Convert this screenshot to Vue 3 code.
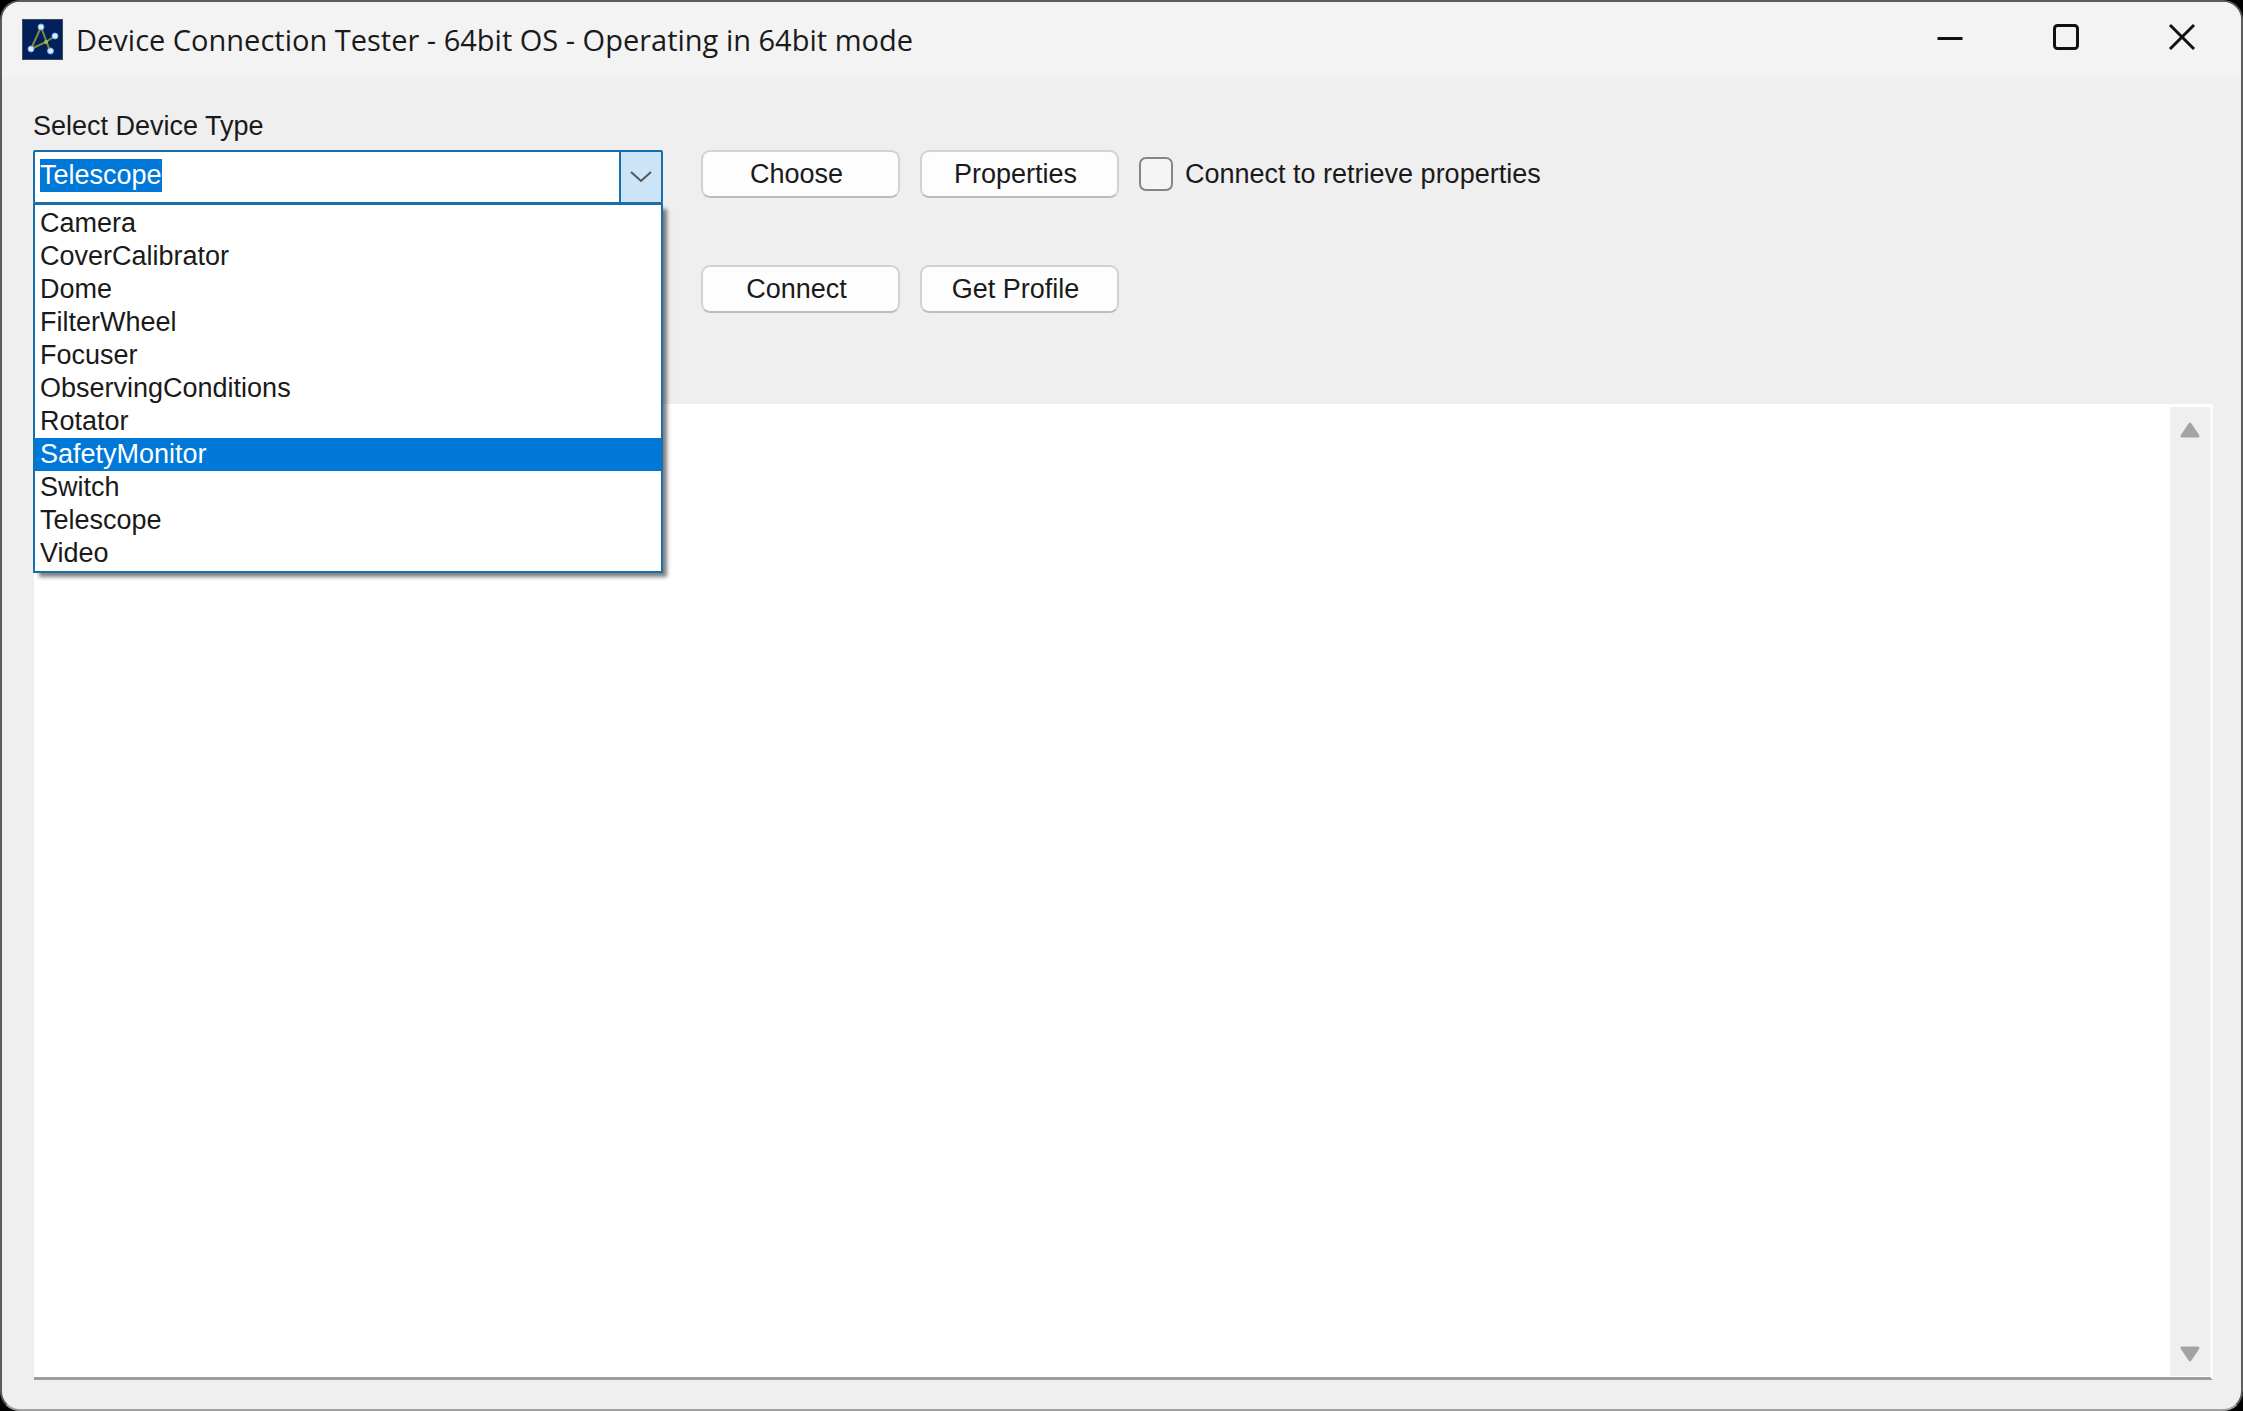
<script setup>
import { ref, onMounted } from 'vue'

const device_types = [
    'Camera',
    'CoverCalibrator',
    'Dome',
    'FilterWheel',
    'Focuser',
    'ObservingConditions',
    'Rotator',
    'SafetyMonitor',
    'Switch',
    'Telescope',
    'Video',
]

const selected = ref('Telescope')
const hovered = ref('SafetyMonitor')
const list_open = ref(true)
const connect_first = ref(false)
const log = ref('')
const device_input = ref(null)

function toggle_list()
{
    list_open.value = !list_open.value
}

function choose_type(type)
{
    selected.value = type
    list_open.value = false
}

onMounted(() => {
    device_input.value.focus()
    device_input.value.select()
})
</script>

<template>
    <div class="window">
        <header class="titlebar">
            <svg class="app_icon" viewBox="0 0 41 41">
                <rect x="0.5" y="0.5" width="40" height="40" fill="#02205a" stroke="#3c4a5c" />
                <path d="M9 30 L19 8 L28 32 M9 30 L24 23 L33 17" fill="none" stroke="#7f8c3a" stroke-width="2" />
                <g fill="#dcecff" stroke="#7fa4dc">
                    <circle cx="19" cy="8" r="3" />
                    <circle cx="33" cy="17" r="3" />
                    <circle cx="9" cy="30" r="3" />
                    <circle cx="28.500" cy="32" r="3" />
                </g>
                <circle cx="24" cy="23" r="2" fill="#a9b86a" />
            </svg>
            <h1 class="title">Device Connection Tester - 64bit OS - Operating in 64bit mode</h1>
            <button class="win_btn" aria-label="Minimize">
                <svg viewBox="0 0 28 28"><path d="M1.500 15.500 H26.500" /></svg>
            </button>
            <button class="win_btn" aria-label="Maximize">
                <svg viewBox="0 0 28 28"><rect x="2.500" y="2.500" width="23" height="23" rx="3" /></svg>
            </button>
            <button class="win_btn" aria-label="Close">
                <svg viewBox="0 0 28 28"><path d="M2 2 L26 26 M26 2 L2 26" /></svg>
            </button>
        </header>

        <main class="form">
            <div class="controls">
                <div class="device">
                    <label for="device-type">Select Device Type</label>
                    <div class="combo">
                        <input id="device-type" ref="device_input" v-model="selected" type="text" role="combobox"
                            aria-controls="device-list" :aria-expanded="list_open" autocomplete="off" spellcheck="false" />
                        <button class="combo_btn" aria-label="Show device types" @click="toggle_list">
                            <svg viewBox="0 0 22 12"><path d="M1 1 L11 10 L21 1" /></svg>
                        </button>
                        <ul v-if="list_open" id="device-list" class="combo_list" role="listbox">
                            <li v-for="type in device_types" :key="type" role="option" :aria-selected="type === hovered"
                                :class="{ active: type === hovered }" @mouseenter="hovered = type" @click="choose_type(type)">
                                {{ type }}
                            </li>
                        </ul>
                    </div>
                </div>

                <div class="actions">
                    <button class="btn">Choose</button>
                    <button class="btn">Properties</button>
                    <label class="check">
                        <input v-model="connect_first" type="checkbox" />
                        <span>Connect to retrieve properties</span>
                    </label>
                    <button class="btn">Connect</button>
                    <button class="btn">Get Profile</button>
                </div>
            </div>

            <div class="output">
                <textarea v-model="log" aria-label="Output" readonly></textarea>
                <div class="scrollbar">
                    <button aria-label="Scroll up">
                        <svg viewBox="0 0 22 18"><path d="M11 3 L19 15 H3 Z" /></svg>
                    </button>
                    <button aria-label="Scroll down">
                        <svg viewBox="0 0 22 18"><path d="M3 4 H19 L11 16 Z" /></svg>
                    </button>
                </div>
            </div>
        </main>
    </div>
</template>

<style>
html {
    background: #000;
}
</style>

<style scoped>
.window {
    box-sizing: border-box;
    display: flex;
    flex-direction: column;
    height: 100vh;
    border: 2px solid #5c5c5c;
    border-bottom-color: #a0a0a0;
    border-radius: 20px;
    overflow: hidden;
    background: #efefef;
    color: #1a1a1a;
    font-family: "Liberation Sans", Arial, sans-serif;
    font-size: 27px;
    line-height: 33px;
}

button,
input,
textarea {
    box-sizing: border-box;
    margin: 0;
    font: inherit;
    color: inherit;
}

.titlebar {
    display: flex;
    align-items: center;
    height: 75px;
    padding: 0 1px 0 20px;
    background: #f3f3f3;
}

.app_icon {
    width: 41px;
    height: 41px;
    margin-right: 13px;
}

.title {
    flex: 1;
    margin: 0;
    font-family: "Open Sans", "Noto Sans", sans-serif;
    font-size: 29px;
    font-weight: 400;
}

.win_btn {
    display: flex;
    align-items: center;
    justify-content: center;
    align-self: flex-start;
    width: 116px;
    height: 70px;
    padding: 0;
    border: 0;
    background: transparent;
}

.win_btn svg {
    width: 28px;
    height: 28px;
    fill: none;
    stroke: #111;
    stroke-width: 3;
}

.form {
    flex: 1;
    display: flex;
    flex-direction: column;
    padding: 33px 28px 29px 31px;
}

.controls {
    display: flex;
    gap: 38px;
    margin-bottom: 91px;
}

.device {
    width: 630px;
}

.device label {
    display: block;
    margin-bottom: 7px;
}

.combo {
    position: relative;
    display: flex;
    height: 54px;
    box-sizing: border-box;
    border: 2px solid #1b6fa8;
    border-radius: 2px;
    background: #fff;
}

.combo input {
    flex: 1;
    min-width: 0;
    padding: 0 5px 4px;
    border: 0;
    outline: 0;
    background: transparent;
}

.combo input::selection {
    background: #0078d7;
    color: #fff;
}

.combo_btn {
    display: flex;
    align-items: center;
    justify-content: center;
    width: 42px;
    padding: 0;
    border: 0;
    border-left: 2px solid #1b6fa8;
    background: #cce4f7;
}

.combo_btn svg {
    width: 22px;
    height: 12px;
    fill: none;
    stroke: #555;
    stroke-width: 2;
}

.combo_list {
    position: absolute;
    z-index: 1;
    top: calc(100% + 1px);
    left: -2px;
    right: -2px;
    margin: 0;
    padding: 2px 0 1px;
    list-style: none;
    border: 2px solid #1b6fa8;
    background: #fff;
    box-shadow: 5px 5px 4px -1px rgba(0, 0, 0, 0.5);
}

.combo_list li {
    padding: 0 5px;
    cursor: default;
}

.combo_list .active {
    background: #0078d7;
    color: #fff;
}

.actions {
    display: grid;
    grid-template-columns: 199px 199px auto;
    grid-auto-rows: 48px;
    gap: 67px 20px;
    padding-top: 40px;
}

.btn {
    padding: 0 8px 0 0;
    border: 2px solid #d2d2d2;
    border-bottom-color: #bcbcbc;
    border-radius: 9px;
    background: #fdfdfd;
}

.check {
    display: flex;
    align-items: center;
    gap: 12px;
}

.check input {
    appearance: none;
    width: 34px;
    height: 34px;
    border: 2px solid #858585;
    border-radius: 7px;
    background: #f5f5f5;
}

.check input:checked {
    background: #0067c0;
}

.output {
    flex: 1;
    display: flex;
    margin-left: 1px;
    border: 0 solid #fbfbfb;
    border-right-width: 3px;
    border-bottom: 3px solid #9c9c9c;
    background: #fff;
}

.output textarea {
    flex: 1;
    padding: 4px;
    border: 0;
    outline: 0;
    resize: none;
    background: #fff;
}

.scrollbar {
    display: flex;
    flex-direction: column;
    justify-content: space-between;
    width: 40px;
    margin: 3px 0 1px;
    background: #efefef;
}

.scrollbar button {
    display: flex;
    align-items: center;
    justify-content: center;
    height: 46px;
    padding: 0;
    border: 0;
    background: transparent;
}

.scrollbar svg {
    width: 22px;
    height: 18px;
    fill: #a3a3a3;
    stroke: #a3a3a3;
    stroke-width: 3;
    stroke-linejoin: round;
}
</style>
